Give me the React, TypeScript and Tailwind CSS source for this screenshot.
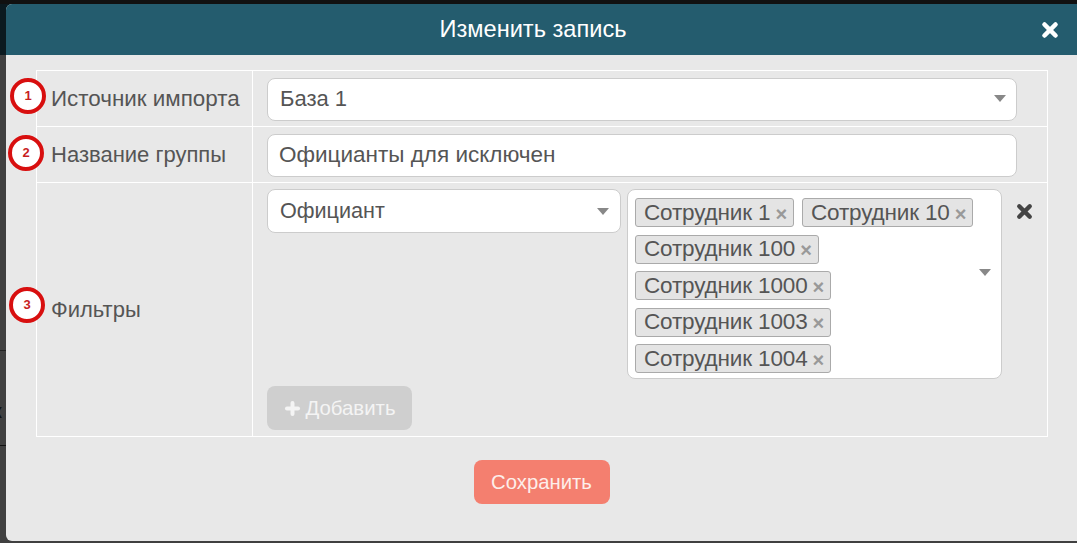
import { Plus, X } from "lucide-react";

const FONT = "font-['Liberation_Sans',Arial,sans-serif]";

const TAG_ROWS = [
  ["Сотрудник 1", "Сотрудник 10"],
  ["Сотрудник 100"],
  ["Сотрудник 1000"],
  ["Сотрудник 1003"],
  ["Сотрудник 1004"],
];

function Caret({ className = "" }: { className?: string }) {
  return (
    <span
      className={`h-0 w-0 border-x-[6px] border-t-[7px] border-x-transparent border-t-[#888] ${className}`}
    />
  );
}

function BoldX({ size, className = "" }: { size: number; className?: string }) {
  return <X size={size} strokeWidth={5} className={className} />;
}

function Marker({ n, className }: { n: number; className: string }) {
  return (
    <div
      className={`absolute flex h-9 w-9 items-center justify-center rounded-full border-4 border-[#d80f0f] bg-white text-[13px] font-bold text-[#c81e1e] ${className}`}
    >
      {n}
    </div>
  );
}

function Tag({ label }: { label: string }) {
  return (
    <span className="flex h-[29px] items-center rounded-[3px] border border-[#aaa] bg-[#e4e4e4] pl-2 pr-[6px] text-[22.5px] tracking-[-0.15px] text-[#555]">
      {label}
      <span className="ml-[5px] mt-[2px] text-[20px] font-bold leading-none text-[#999]">×</span>
    </span>
  );
}

export default function App() {
  return (
    <div className={`relative h-[543px] w-[1077px] overflow-hidden bg-[#404040] ${FONT}`}>
      {/* backdrop bits peeking out behind the modal */}
      <div className="absolute inset-x-0 top-0 h-[55px] bg-[#0b1a20]" />
      <div className="absolute inset-x-0 top-0 h-[4px] bg-[#111]" />
      <div className="absolute left-0 top-[350px] h-px w-[6px] bg-[#222]" />
      <div className="absolute left-0 top-[445px] h-px w-[6px] bg-[#111]" />
      <div className="absolute left-[-7px] top-[396px] text-[20px] text-[#111]">к</div>

      <div className="absolute left-[6px] top-[4px] h-[537px] w-[1080px] overflow-hidden rounded-[6px] bg-[#e8e8e8]">
        <header className="flex h-[51px] w-[1071px] items-center justify-center bg-[#245c6e] pr-[17px] text-[23.6px] text-white">
          Изменить запись
          <BoldX size={22} className="absolute left-[1033px] top-[15px] text-white" />
        </header>

        <div className="ml-[30px] mt-[15px] w-[1012px] border border-white text-[21.6px] text-[#555]">
          <div className="flex h-[56px] border-b border-white">
            <div className="flex w-[216px] items-center border-r border-white pl-[14px] text-[22.4px]">
              Источник импорта
            </div>
            <div className="pl-[14px] pt-[7px]">
              <div className="flex h-[43px] w-[750px] items-center justify-between rounded-[8px] border border-[#ccc] bg-white pb-[2px] pl-3 pr-[10px] text-[22px]">
                База 1
                <Caret />
              </div>
            </div>
          </div>

          <div className="flex h-[56px] border-b border-white">
            <div className="flex w-[216px] items-center border-r border-white pl-[14px] text-[22px]">
              Название группы
            </div>
            <div className="pl-[14px] pt-[7px]">
              <div className="flex h-[43px] w-[750px] items-center rounded-[8px] border border-[#ccc] bg-white pb-[2px] pl-[11px] text-[22.5px]">
                Официанты для исключен
              </div>
            </div>
          </div>

          <div className="flex h-[253px]">
            <div className="flex w-[216px] items-center border-r border-white pl-[14px] text-[22px]">
              Фильтры
            </div>
            <div className="flex flex-col pl-[14px] pt-[6px]">
              <div className="flex items-start">
                <div className="flex h-[44px] w-[354px] items-center justify-between rounded-[8px] border border-[#ccc] bg-white pl-3 pr-[11px]">
                  Официант
                  <Caret />
                </div>
                <div className="relative ml-[6px] flex h-[190px] w-[375px] flex-col gap-[7.5px] rounded-[8px] border border-[#ccc] bg-white pl-[7px] pt-[8px]">
                  {TAG_ROWS.map((row) => (
                    <div key={row[0]} className="flex gap-2">
                      {row.map((label) => (
                        <Tag key={label} label={label} />
                      ))}
                    </div>
                  ))}
                  <Caret className="absolute right-[10px] top-[79px]" />
                </div>
                <BoldX size={21} className="ml-[12px] mt-[12px] text-[#444]" />
              </div>
              <button className="mt-[7px] flex h-[44px] w-[145px] items-center justify-center gap-[3px] rounded-[8px] bg-[#cfcfcf] text-[20.4px] text-[#f4f4f4]">
                <Plus size={19} strokeWidth={5} />
                Добавить
              </button>
            </div>
          </div>
        </div>

        <div className="mt-[23px] flex w-[1071px] justify-center">
          <button className="h-[44px] w-[136px] rounded-[8px] bg-[#f47f6f] text-[20.3px] text-[#fdeeea]">
            Сохранить
          </button>
        </div>
      </div>

      <Marker n={1} className="left-[10px] top-[78px]" />
      <Marker n={2} className="left-[8px] top-[135px]" />
      <Marker n={3} className="left-[9px] top-[287px]" />
    </div>
  );
}
